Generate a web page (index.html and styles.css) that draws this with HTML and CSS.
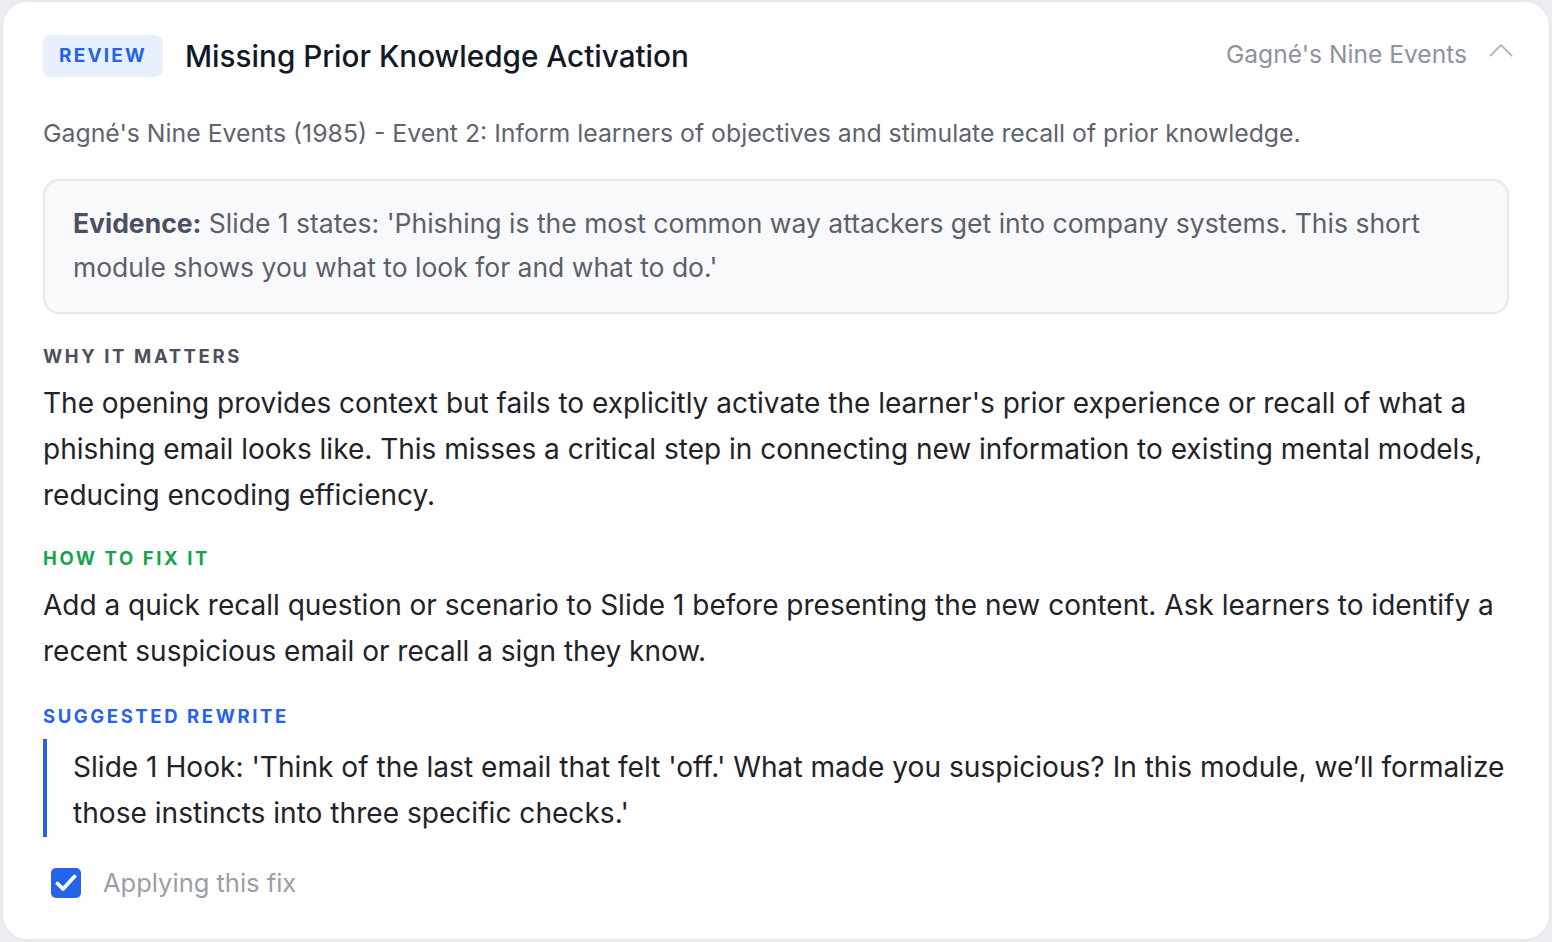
FILE: index.html
```html
<!DOCTYPE html>
<html lang="en">
  <head>
    <meta charset="UTF-8" />
    <meta name="viewport" content="width=device-width, initial-scale=1.0" />
    <title>Review finding</title>
    <link rel="stylesheet" href="styles.css">
  </head>
  <body>
    <div class="card">
      <div class="card-header">
        <span class="badge">REVIEW</span>
        <p class="title">Missing Prior Knowledge Activation</p>
        <span class="framework">Gagné's Nine Events</span>
        <button class="collapse-button" aria-label="Collapse">
          <svg width="24" height="14" viewBox="0 0 24 14" fill="none">
            <path d="M1.5 12.5 L12 2 L22.5 12.5" stroke="#b5b9c2" stroke-width="2" stroke-linecap="round" stroke-linejoin="round"/>
          </svg>
        </button>
      </div>

      <p class="source">Gagné's Nine Events (1985) - Event 2: Inform learners of objectives and stimulate recall of prior knowledge.</p>

      <p class="evidence"><b>Evidence:</b> Slide 1 states: 'Phishing is the most common way attackers get into company systems. This short module shows you what to look for and what to do.'</p>

      <p class="section-label">WHY IT MATTERS</p>
      <p class="body-text">The opening provides context but fails to explicitly activate the learner's prior experience or recall of what a phishing email looks like. This misses a critical step in connecting new information to existing mental models, reducing encoding efficiency.</p>

      <p class="section-label fix-label">HOW TO FIX IT</p>
      <p class="body-text">Add a quick recall question or scenario to Slide 1 before presenting the new content. Ask learners to identify a recent suspicious email or recall a sign they know.</p>

      <p class="section-label rewrite-label">SUGGESTED REWRITE</p>
      <blockquote class="rewrite">Slide 1 Hook: 'Think of the last email that felt 'off.' What made you suspicious? In this module, we’ll formalize those instincts into three specific checks.'</blockquote>

      <label class="apply-row">
        <span class="checkbox">
          <svg width="22" height="18" viewBox="0 0 22 18" fill="none">
            <path d="M2.5 9.5 L8 15 L19.5 2.5" stroke="white" stroke-width="3.8" stroke-linecap="round" stroke-linejoin="round"/>
          </svg>
        </span>
        <span class="apply-text">Applying this fix</span>
      </label>
    </div>
  </body>
</html>
```

FILE: styles.css
```css
body{
  margin: 0;
  background-color: #eceef2;
  font-family: Inter, "Noto Sans", Arial, sans-serif;
}
p{
  margin: 0;
}
.card{
  box-sizing: border-box;
  height: 941px;
  margin: 0 1px;
  background-color: white;
  border: 2px solid #e6e8ec;
  border-radius: 26px;
  padding: 33px 40px 0 40px;
}
.card-header{
  display: flex;
  align-items: center;
  height: 42px;
}
.badge{
  background-color: #e8f0fd;
  color: #2563eb;
  font-size: 19px;
  font-weight: 700;
  letter-spacing: 2.2px;
  height: 42px;
  line-height: 42px;
  padding: 0 16px;
  border-radius: 8px;
}
.title{
  margin-left: 22px;
  font-size: 29.7px;
  font-weight: 500;
  color: #111827;
  flex: 1;
}
.framework{
  font-size: 24.6px;
  color: #8e939c;
  margin-top: -4px;
}
.collapse-button{
  background-color: transparent;
  border: none;
  padding: 0;
  margin-left: 22px;
  margin-right: -4px;
  margin-top: -12px;
  cursor: pointer;
  display: flex;
}
.source{
  margin-top: 38px;
  font-size: 24.8px;
  line-height: 36px;
  color: #5f646e;
}
.evidence{
  margin-top: 28px;
  background-color: #f8f9fb;
  border: 2px solid #e6e8ec;
  border-radius: 16px;
  padding: 20px 28px 23px 28px;
  font-size: 26.5px;
  line-height: 44px;
  color: #5b606a;
}
.evidence b{
  font-weight: 700;
  color: #4b5060;
}
.section-label{
  margin-top: 30px;
  font-size: 18.5px;
  line-height: 24px;
  font-weight: 700;
  letter-spacing: 2.6px;
  color: #4b5060;
}
.fix-label{
  margin-top: 28px;
  color: #16a34a;
}
.rewrite-label{
  color: #2563eb;
}
.body-text{
  margin-top: 12px;
  font-size: 28px;
  line-height: 46px;
  color: #1f2329;
}
.rewrite{
  margin: 11px 0 0 0;
  border-left: 4px solid #2563eb;
  padding: 5px 0 1px 26px;
  font-size: 28.1px;
  line-height: 46px;
  color: #1f2329;
}
.apply-row{
  display: flex;
  align-items: center;
  margin-top: 30px;
  margin-left: 8px;
  cursor: pointer;
}
.checkbox{
  width: 30px;
  height: 30px;
  border-radius: 5px;
  background-color: #2563eb;
  display: flex;
  align-items: center;
  justify-content: center;
}
.apply-text{
  margin-left: 22px;
  font-size: 25.5px;
  color: #9a9ea7;
}
```
